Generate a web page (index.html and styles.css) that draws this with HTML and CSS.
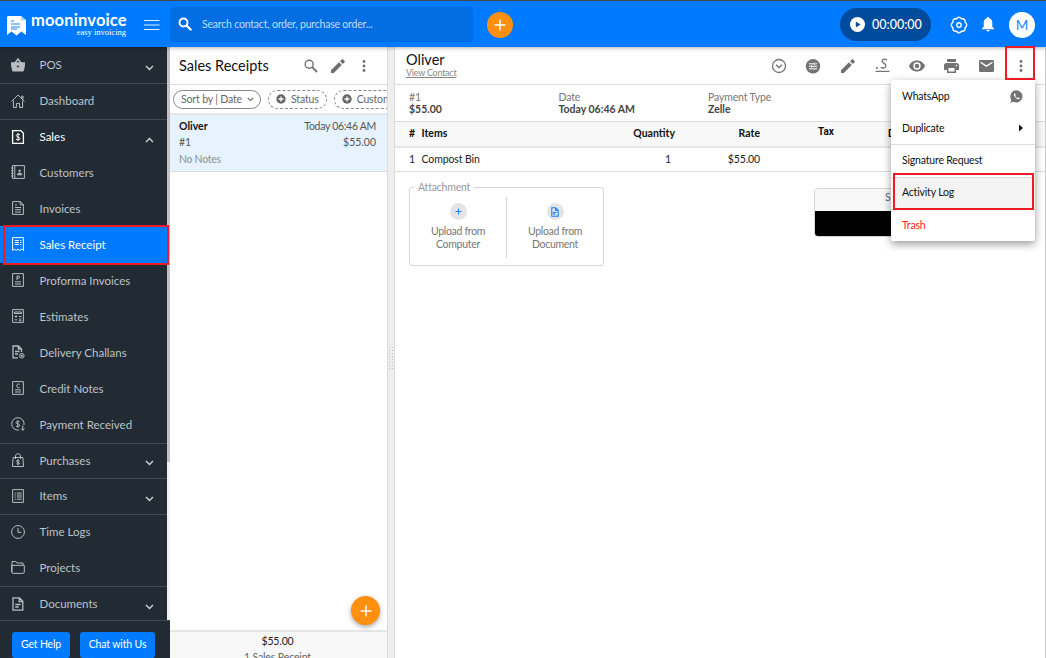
FILE: index.html
```html
<!DOCTYPE html>
<html lang="en">
<head>
<meta charset="UTF-8" />
<meta name="viewport" content="width=device-width, initial-scale=1" />
<title>Sales Receipts - Moon Invoice</title>
<link rel="stylesheet" href="styles.css">
</head>
<body>
  <header class="topbar">
    <div class="brand">
      <svg class="brand-icon" width="19" height="20" viewBox="0 0 19 20">
        <path d="M1 0h13l5 4v15l-4.500-3.500-5 4-5-4L0 19V1z" fill="#fff"/>
        <path d="M4 5h3M4 8h9M4 11h9M4 13h6" stroke="#1684ff" stroke-width="1.100"/>
        <path d="M14 0v4.500h5" fill="#a9d2ff"/>
      </svg>
      <div class="brand-text">
        <div class="brand-name">mooninvoice</div>
        <div class="brand-tag">easy invoicing</div>
      </div>
      <svg class="burger" width="16" height="12" viewBox="0 0 16 12"><path d="M0 1.500h15.500M0 6h15.500M0 10.500h15.500" stroke="#e2f0ff"/></svg>
    </div>
    <div class="search">
      <svg width="15" height="15" viewBox="0 0 15 15" fill="none" stroke="#fff"><circle cx="5.500" cy="5.500" r="4" stroke-width="1.900"/><path d="M8.500 8.500l4.800 4.800" stroke-width="2.200"/></svg>
      <span>Search contact, order, purchase order...</span>
    </div>
    <div class="add"><svg width="12" height="12" viewBox="0 0 12 12"><path d="M6 .5v11M.5 6h11" stroke="#fff" stroke-width="1.500"/></svg></div>
    <div class="topbar-right">
      <div class="timer">
        <svg width="15" height="15" viewBox="0 0 15 15"><circle cx="7.500" cy="7.500" r="7.500" fill="#fff"/><path d="M5.800 4.400v6.200l4.700-3.100z" fill="#004b9b"/></svg>
        <span>00:00:00</span>
      </div>
      <svg class="gear" width="18" height="18" viewBox="0 0 18 18" fill="none" stroke="#fff" stroke-width="1.400">
        <path d="M6.500 2.800Q9-.4 11.500 2.800 15.600 2.300 15.100 6.300 18.300 9 15.100 11.700 15.600 15.700 11.500 15.200 9 18.400 6.500 15.200 2.400 15.700 2.900 11.700-.3 9 2.900 6.300 2.400 2.300 6.500 2.800z" stroke-linejoin="round"/>
        <circle cx="9" cy="9" r="2.200"/>
      </svg>
      <svg class="bell" width="12" height="15" viewBox="0 0 12 15" fill="#fff"><path d="M6 0c.7 0 1.100.5 1.100 1.200C9.300 1.700 10.300 3.500 10.300 6v3.800L12 11.500v.7H0v-.7l1.700-1.700V6c0-2.500 1-4.300 3.200-4.800C4.900.5 5.300 0 6 0zM4.500 13.100h3c0 .9-.7 1.500-1.500 1.500s-1.500-.6-1.500-1.500z"/></svg>
      <div class="avatar">M</div>
    </div>
  </header>

  <div class="page">
    <nav class="sidebar">
      <div class="menu">
        <div class="group">
          <div class="nav-item">
            <svg class="ico" viewBox="0 0 14 14"><path d="M4 5L7 1l3 4" fill="none" stroke="#b9bdc1" stroke-width="1.500"/><path d="M0 4.800h14L12.300 13H1.700z" fill="#b9bdc1"/><circle cx="7" cy="8.500" r="1.400" fill="#222a33"/></svg>
            <span>POS</span>
            <svg class="chev" viewBox="0 0 9 6"><path d="M1 1l3.500 3.500L8 1"/></svg>
          </div>
        </div>
        <div class="group">
          <div class="nav-item">
            <svg class="ico" viewBox="0 0 14 14"><path d="M.6 7.500L7 1l6.400 6.500M2.400 6.500v7h3V9.400h3.200v4.100h3v-7M10.800 4.500V2h1.200v3.500"/></svg>
            <span>Dashboard</span>
          </div>
        </div>
        <div class="group">
          <div class="nav-item open">
            <svg class="ico" viewBox="0 0 14 14"><path d="M1.600.6h8.200l2.600 2.600v10.200H1.600z" stroke-width="1.300"/><path d="M8.900 4.800C8.300 3.900 5.300 3.900 5.300 5.600s3.600 1 3.600 2.900-3 1.700-3.800.6M7 3.200v7.600"/></svg>
            <span>Sales</span>
            <svg class="chev" viewBox="0 0 9 6"><path d="M1 5l3.500-3.500L8 5"/></svg>
          </div>
          <div class="nav-item">
            <svg class="ico" viewBox="0 0 14 14"><path d="M1.500.6h11.900v12.800H1.500zM3.800.6v12.800M0 3h2.500M0 5.700h2.500M0 8.300h2.500M0 11h2.500"/><path d="M6.300 9.800c0-2.300 4.600-2.300 4.600 0z" fill="#b9bdc1"/><circle cx="8.600" cy="5.700" r=".8" fill="#b9bdc1"/></svg>
            <span>Customers</span>
          </div>
          <div class="nav-item">
            <svg class="ico" viewBox="0 0 14 14"><path d="M1.600.6h7.800l3 3v9.800H1.600zM9.200.6v3.200h3.200M4 4h2M4 6.500h6M4 8.700h6M4 11h6"/></svg>
            <span>Invoices</span>
          </div>
          <div class="nav-item active">
            <svg class="ico" viewBox="0 0 14 14"><path d="M1.600.6h10.800v12.800l-1.800-1.200-1.800 1.200L7 12.200l-1.800 1.200-1.800-1.200-1.800 1.200zM3.800 3.500h4M3.800 5.500h4M3.800 7.500h4M9.200 3.500h1.200M9.200 5.500h1.200M9.200 7.500h1.200"/></svg>
            <span>Sales Receipt</span>
          </div>
          <div class="nav-item">
            <svg class="ico" viewBox="0 0 14 14"><path d="M1.600.6h10.800v12.800H1.600zM4 8.800h6M4 11h6M6 7V3h1.500c1.400 0 1.400 2.200 0 2.200H6"/></svg>
            <span>Proforma Invoices</span>
          </div>
          <div class="nav-item">
            <svg class="ico" viewBox="0 0 14 14"><path d="M1.600.6h10.800v12.800H1.600zM3.500 3h7v1.500h-7zM3.700 7.500h2.600M5 6.300v2.400M8 7.500h2.500M3.700 10.800h2.600M8 10h2.500M8 11.700h2.500"/></svg>
            <span>Estimates</span>
          </div>
          <div class="nav-item">
            <svg class="ico" viewBox="0 0 14 14"><path d="M7 12.800H2V1h5.500l3 3v3M7.300 1v3.200h3.200M4 6.500h4.500M4 9h3" stroke-width="1.300"/><circle cx="10.800" cy="10.700" r="2.300"/><path d="M9.600 10.700h2.400M10.800 9.600v2.400"/></svg>
            <span>Delivery Challans</span>
          </div>
          <div class="nav-item">
            <svg class="ico" viewBox="0 0 14 14"><path d="M1.600.6h10.800v12.800H1.600zM4 8.800h6M4 11h6M8.600 3.500c-1-1-2.900-.5-2.900 1.400s1.900 2.400 2.900 1.400"/></svg>
            <span>Credit Notes</span>
          </div>
          <div class="nav-item">
            <svg class="ico" viewBox="0 0 14 14"><path d="M8 13A6.200 6.200 0 1 1 13 8M8.500 5C7.700 4 5.100 4 5.100 5.600s3.500 1 3.500 2.700-2.800 1.700-3.600.6M6.800 3.500v7M11.800 8.500v4.800M10.200 11.600l1.600 1.700 1.600-1.700"/></svg>
            <span>Payment Received</span>
          </div>
        </div>
        <div class="group short">
          <div class="nav-item">
            <svg class="ico" viewBox="0 0 14 14"><path d="M2.200 4.500h9.600l.8 9H1.400zM4.500 6V3c0-3 5-3 5 0v3M8.400 7.500c-.8-.8-2.900-.6-2.800.6s2.900.8 2.900 2.100-2.200 1.300-3 .4M7 6.500v5.600"/></svg>
            <span>Purchases</span>
            <svg class="chev" viewBox="0 0 9 6"><path d="M1 1l3.500 3.500L8 1"/></svg>
          </div>
        </div>
        <div class="group">
          <div class="nav-item">
            <svg class="ico" viewBox="0 0 14 14"><path d="M1.600.6h10.800v12.800H1.600zM3.500 4h1.300M5.800 4h5M3.500 6h1.300M5.800 6h5M3.500 8h1.300M5.800 8h5M3.500 10.200h1.300M5.800 10.200h5"/></svg>
            <span>Items</span>
            <svg class="chev" viewBox="0 0 9 6"><path d="M1 1l3.500 3.500L8 1"/></svg>
          </div>
        </div>
        <div class="group">
          <div class="nav-item">
            <svg class="ico" viewBox="0 0 14 14"><circle cx="7" cy="7" r="6.400"/><path d="M7 3v4.300h3.300"/></svg>
            <span>Time Logs</span>
          </div>
          <div class="nav-item">
            <svg class="ico" viewBox="0 0 14 14"><path d="M1 12V1.500h3.800L6 3h6v2M.7 5.300h12.600v6.500q0 1.600-1.600 1.600H2.300Q.7 13.400.7 11.800z"/></svg>
            <span>Projects</span>
          </div>
        </div>
        <div class="group last">
          <div class="nav-item">
            <svg class="ico" viewBox="0 0 14 14"><path d="M2 .9h6.500l3.300 3.300v8.900H2zM8.200.9v3.600h3.600M4.200 7.500h5.300M4.200 10h3.500" stroke-width="1.300"/></svg>
            <span>Documents</span>
            <svg class="chev" viewBox="0 0 9 6"><path d="M1 1l3.500 3.500L8 1"/></svg>
          </div>
        </div>
      </div>
      <div class="scrollbar"><div class="thumb"></div></div>
      <div class="help">
        <div class="help-btn">Get Help</div>
        <div class="help-btn wide">Chat with Us</div>
      </div>
      <div class="mark mark-nav"></div>
    </nav>

    <section class="list">
      <div class="list-head">
        <h1>Sales Receipts</h1>
        <svg width="14" height="14" viewBox="0 0 14 14" fill="none" stroke="#6f6f6f"><circle cx="5.200" cy="5.200" r="4" stroke-width="1.400"/><path d="M8.200 8.200l4.800 4.800" stroke-width="1.800"/></svg>
        <svg width="14" height="14" viewBox="0 0 14 14" fill="#6f6f6f"><path d="M0 11.200V14h2.800l8-8L8 3.200zM13.600 3.200c.4-.4.4-.8 0-1.200L12 .4c-.4-.4-.8-.4-1.200 0L9 2.200 11.800 5z"/></svg>
        <svg width="4" height="12" viewBox="0 0 4 12" fill="#6f6f6f"><circle cx="2" cy="1.500" r="1.400"/><circle cx="2" cy="6" r="1.400"/><circle cx="2" cy="10.500" r="1.400"/></svg>
      </div>
      <div class="filters">
        <div class="chip solid">Sort by | Date <svg width="7" height="5" viewBox="0 0 7 5"><path d="M.8 1l2.700 2.600L6.200 1" fill="none" stroke="#666" stroke-width="1.100"/></svg></div>
        <div class="chip"><svg width="10" height="10" viewBox="0 0 10 10"><circle cx="5" cy="5" r="4.700" fill="#666"/><path d="M5 2.500v5M2.500 5h5" stroke="#fff" stroke-width="1.300"/></svg>Status</div>
        <div class="chip"><svg width="10" height="10" viewBox="0 0 10 10"><circle cx="5" cy="5" r="4.700" fill="#666"/><path d="M5 2.500v5M2.500 5h5" stroke="#fff" stroke-width="1.300"/></svg>Customer</div>
      </div>
      <div class="receipt">
        <div class="line"><b>Oliver</b><span class="when">Today 06:46 AM</span></div>
        <div class="line"><span>#1</span><span>$55.00</span></div>
        <div class="line notes">No Notes</div>
      </div>
      <div class="list-body"></div>
      <div class="list-foot">
        <div class="sum">$55.00</div>
        <div>1 Sales Receipt</div>
      </div>
      <div class="fab"><svg width="12" height="12" viewBox="0 0 12 12"><path d="M6 .5v11M.5 6h11" stroke="#fff" stroke-width="1.500"/></svg></div>
    </section>

    <div class="splitter">
      <svg width="6" height="24" viewBox="0 0 6 24"><path d="M1.500 0v24M4.500 0v24" stroke="#bdbdbd" stroke-dasharray="1 2"/></svg>
    </div>

    <main class="detail">
      <div class="detail-head">
        <div class="who">
          <h2>Oliver</h2>
          <a>View Contact</a>
        </div>
        <div class="tools">
          <div class="tool"><svg width="16" height="16" viewBox="0 0 16 16" fill="none" stroke="#737373" stroke-width="1.300"><circle cx="8" cy="8" r="6.500"/><path d="M5 6.700l3 2.800 3-2.800"/></svg></div>
          <div class="tool"><svg width="16" height="16" viewBox="0 0 16 16"><circle cx="8" cy="8.300" r="7.200" fill="#737373"/><path d="M4 5.800h5M10.500 5.800h1.700M4 8.300h1.700M7 8.300h5.200M4 10.800h4M9.700 10.800h2.500M9.700 4.600v2.400M6.400 7.100v2.400M9 9.600V12" stroke="#fff"/></svg></div>
          <div class="tool"><svg width="14" height="14" viewBox="0 0 14 14" fill="#6f6f6f"><path d="M0 11.200V14h2.800l8-8L8 3.200zM13.600 3.200c.4-.4.4-.8 0-1.200L12 .4c-.4-.4-.8-.4-1.200 0L9 2.200 11.800 5z"/></svg></div>
          <div class="tool"><svg width="15" height="15" viewBox="0 0 15 15" fill="none" stroke="#737373" stroke-width="1.400"><path d="M12 1.800C9.500.4 6.800 1.600 7.300 3.600s3.900 2 3.500 4.400-3.800 2.500-5 1.100M.5 13.400h14"/><path d="M1 9.800h1.800" stroke-width="1.700"/></svg></div>
          <div class="tool"><svg width="16" height="12" viewBox="0 0 16 12" fill="#737373"><path fill-rule="evenodd" d="M8 .5C4.400.5 1.300 2.700 0 6c1.300 3.300 4.400 5.500 8 5.500s6.700-2.200 8-5.500C14.700 2.700 11.600.5 8 .5zm0 9.200a3.700 3.700 0 1 1 0-7.400 3.700 3.700 0 0 1 0 7.400z"/><circle cx="8" cy="6" r="2.200"/></svg></div>
          <div class="tool"><svg width="15" height="14" viewBox="0 0 15 14" fill="#737373"><path fill-rule="evenodd" d="M3 0h9v3H3zM2.500 4h10Q15 4 15 6.500V11h-3v3H3v-3H0V6.500Q0 4 2.500 4zM4.500 9v3.500h6V9zM12.500 5.800a.8.800 0 1 0 0 1.600.8.800 0 0 0 0-1.600z"/></svg></div>
          <div class="tool"><svg width="15" height="12" viewBox="0 0 15 12"><rect width="15" height="12" rx="1.300" fill="#737373"/><path d="M1.500 2.200l6 3.900 6-3.900" fill="none" stroke="#fff" stroke-width="1.300"/></svg></div>
          <div class="tool"><svg width="4" height="12" viewBox="0 0 4 12" fill="#6f6f6f"><circle cx="2" cy="1.500" r="1.400"/><circle cx="2" cy="6" r="1.400"/><circle cx="2" cy="10.500" r="1.400"/></svg></div>
        </div>
      </div>
      <div class="info">
        <div><p>#1</p><b>$55.00</b></div>
        <div><p>Date</p><b>Today 06:46 AM</b></div>
        <div><p>Payment Type</p><b>Zelle</b></div>
      </div>
      <div class="row row-head">
        <span>#</span><span>Items</span><span class="num">Quantity</span><span class="num">Rate</span><span class="tax">Tax</span><span class="tax disc">Discount</span>
      </div>
      <div class="row">
        <span>1</span><span>Compost Bin</span><span class="num qty">1</span><span class="num">$55.00</span>
      </div>
      <div class="below">
        <fieldset class="attach">
          <legend>Attachment</legend>
          <div class="upload">
            <div class="dot"><svg width="7" height="7" viewBox="0 0 7 7"><path d="M3.500.5v6M.5 3.500h6" stroke="#1a82ff"/></svg></div>
            Upload from<br>Computer
          </div>
          <div class="upload">
            <div class="dot"><svg width="8" height="10" viewBox="0 0 8 10" fill="none" stroke="#1a82ff" stroke-width="1.100"><path d="M.8.800h3.900l2.500 2.500v5.900H.8zM4.500.8v2.700h2.700M2.500 6.800V5.500h3M2.500 7.300h2"/></svg></div>
            Upload from<br>Document
          </div>
        </fieldset>
        <div class="totals">
          <div class="totals-top">Sub Total</div>
          <div class="totals-sum"></div>
        </div>
      </div>

      <div class="popup">
        <div class="popup-item">WhatsApp
          <svg width="13" height="13" viewBox="0 0 13 13"><path d="M6.500.3a6.100 6.100 0 1 1-3 11.500L.4 12.700l.9-3A6.100 6.100 0 0 1 6.500.3z" fill="#737373"/><path d="M4.200 3.400c-1 1.200.3 3.300 1.400 4.400s3.100 2.200 4.100 1.100l-.1-.9-1.400-.7-.8.700C6.500 7.700 5.500 6.700 5.200 5.900l.6-.8-.6-1.600z" fill="#fff"/></svg>
        </div>
        <div class="popup-item">Duplicate
          <svg width="4" height="8" viewBox="0 0 4 8"><path d="M0 0.500v7L4 4z" fill="#111"/></svg>
        </div>
        <div class="popup-item ruled">Signature Request</div>
        <div class="popup-item ruled hover">Activity Log</div>
        <div class="popup-item ruled trash">Trash</div>
        <div class="mark mark-log"></div>
      </div>
      <div class="mark mark-more"></div>
    </main>
  </div>
</body>
</html>
```

FILE: styles.css
```css
* {
  box-sizing: border-box;
}
body {
  margin: 0;
  width: 1046px;
  height: 658px;
  overflow: hidden;
  display: flex;
  flex-direction: column;
  font-family: Lato, sans-serif;
  font-size: 10.5px;
  color: #222;
  background: #fff;
}
h1, h2, p {
  margin: 0;
  font-weight: 400;
}
svg {
  display: block;
  flex: none;
}

/* top bar */
.topbar {
  height: 47px;
  flex: none;
  display: flex;
  align-items: center;
  background: #007bff;
  border-top: 1px solid #46484b;
  color: #fff;
  position: relative;
  z-index: 1;
  box-shadow: 0 1px 4px rgba(0, 0, 0, 0.3);
  padding-top: 1px;
}
.brand {
  width: 170px;
  display: flex;
  align-items: center;
  padding-left: 7px;
}
.brand-icon {
  margin-top: 2px;
}
.brand-text {
  width: 96px;
  margin-left: 5px;
}
.brand-name {
  font-size: 16.5px;
  line-height: 16px;
  font-weight: 700;
  letter-spacing: 0.15px;
}
.brand-tag {
  font: 8.5px/9px "Liberation Serif", serif;
  text-align: right;
  padding-right: 1px;
}
.burger {
  margin-left: 17px;
}
.search {
  width: 303px;
  height: 35px;
  display: flex;
  align-items: center;
  gap: 9px;
  padding: 0 0 1px 8px;
  border-radius: 4px;
  background: #006ee3;
  color: #c4dcf8;
  letter-spacing: -0.2px;
}
.add {
  width: 26px;
  height: 26px;
  margin-left: 14px;
  display: flex;
  align-items: center;
  justify-content: center;
  border-radius: 50%;
  background: #ff8f0f;
}
.topbar-right {
  margin-left: auto;
  padding-right: 11px;
  display: flex;
  align-items: center;
}
.timer {
  width: 91px;
  height: 33px;
  display: flex;
  align-items: center;
  gap: 7px;
  padding-left: 10px;
  border-radius: 17px;
  background: #004b9b;
  font-size: 12.5px;
  font-weight: 500;
}
.timer span {
  margin-top: -1px;
}
.gear {
  margin-left: 19px;
}
.bell {
  margin: 0 15px 0 14px;
}
.avatar {
  width: 26px;
  height: 26px;
  line-height: 26px;
  border-radius: 50%;
  background: #fff;
  color: #1a82ff;
  font-size: 13.5px;
  text-align: center;
}

.page {
  flex: 1;
  display: flex;
  min-height: 0;
}

/* sidebar */
.sidebar {
  width: 170px;
  display: grid;
  grid-template-columns: 167px 3px;
  grid-template-rows: 573px 1fr;
  background: #222a33;
  position: relative;
}
.menu {
  padding-top: 1px;
  overflow: hidden;
}
.group + .group {
  border-top: 1px solid #434a52;
}
.group + .group .nav-item:first-child {
  height: 35px;
}
.group.short .nav-item:first-child {
  height: 34px !important;
}
.group:first-child .nav-item {
  height: 35px;
}
.nav-item {
  height: 36px;
  display: flex;
  align-items: center;
  padding: 0 13px 2px 11px;
  color: #bfc3c7;
  font-size: 11.5px;
}
.nav-item span {
  margin-left: 14.5px;
}
.ico {
  width: 14px;
  height: 14px;
  fill: none;
  stroke: #b9bdc1;
  stroke-width: 1;
}
.chev {
  width: 9px;
  height: 6px;
  margin: 6px 0 0 auto;
  fill: none;
  stroke: #d0d3d5;
  stroke-width: 1.4;
}
.nav-item.open, .nav-item.active {
  color: #fff;
}
.nav-item.active {
  background: #007bff;
  height: 37px;
  margin-top: -1px;
  padding-bottom: 1px;
}
.open .ico, .active .ico {
  stroke: #fff;
}
.scrollbar {
  background: #f1f1f1;
}
.thumb {
  height: 415px;
  background: #c1c1c1;
}
.help {
  grid-column: span 2;
  border-top: 1px solid #434a52;
  padding: 11px 0 0 12px;
  display: flex;
  gap: 10px;
}
.help-btn {
  width: 58px;
  height: 26px;
  line-height: 25px;
  border-radius: 3px;
  background: #007bff;
  color: #fff;
  text-align: center;
  white-space: nowrap;
  letter-spacing: -0.15px;
}
.help-btn.wide {
  width: 75px;
}

/* receipts list */
.list {
  width: 217px;
  display: flex;
  flex-direction: column;
  position: relative;
  overflow: hidden;
}
.list-head {
  height: 38px;
  flex: none;
  display: flex;
  align-items: center;
  padding: 0 0 0 9px;
  border-bottom: 1px solid #ddd;
}
.list-head h1 {
  width: 125px;
  font-size: 14.5px;
  color: #111;
}
.list-head svg + svg {
  margin-left: 13px;
}
.list-head svg:last-child {
  margin-left: 17px;
}
.filters {
  height: 30px;
  flex: none;
  display: flex;
  align-items: center;
  gap: 7px;
  padding-left: 3px;
  border-bottom: 2px solid #e6e6e6;
}
.chip {
  height: 19px;
  flex: none;
  display: flex;
  align-items: center;
  gap: 5px;
  padding: 0 7px;
  border: 1px dashed #888;
  border-radius: 10px;
  color: #666;
  white-space: nowrap;
  letter-spacing: -0.15px;
}
.chip.solid {
  width: 88px;
  border-style: solid;
}
.receipt {
  height: 57px;
  flex: none;
  padding: 3px 11px 0 9px;
  background: #e6f3fe;
  border-bottom: 1px solid #ddd;
  color: #555;
}
.line {
  display: flex;
  justify-content: space-between;
  line-height: 16px;
}
.line b {
  color: #111;
}
.when {
  letter-spacing: -0.3px;
}
.line.notes {
  color: #8a9299;
  letter-spacing: -0.3px;
  padding-top: 1px;
}
.list-body {
  flex: 1;
}
.list-foot {
  height: 28px;
  flex: none;
  padding: 1px 2px 0 0;
  border-top: 2px solid #e6e6e6;
  background: #f8f8f8;
  text-align: center;
  line-height: 16px;
  letter-spacing: -0.15px;
  color: #666;
}
.sum {
  color: #222;
}
.fab {
  position: absolute;
  right: 7px;
  bottom: 33px;
  width: 29px;
  height: 29px;
  display: flex;
  align-items: center;
  justify-content: center;
  border-radius: 50%;
  background: #ff8f0f;
  box-shadow: 0 2px 5px rgba(0, 0, 0, 0.35);
}

.splitter {
  width: 8px;
  display: flex;
  align-items: center;
  justify-content: center;
  padding-top: 12px;
  background: #eee;
  border: 1px solid #dcdcdc;
  border-width: 0 1px;
}

/* receipt detail */
.detail {
  flex: 1;
  position: relative;
  border-right: 1px solid #ccc;
}
.detail-head {
  height: 38px;
  display: flex;
  justify-content: space-between;
  padding: 5px 7px 0 11px;
  border-bottom: 1px solid #ddd;
}
.who h2 {
  font-size: 14.5px;
  line-height: 17px;
  margin-top: -1px;
  color: #111;
}
.who a {
  display: block;
  font-size: 9px;
  line-height: 10px;
  letter-spacing: -0.25px;
  color: #888;
  text-decoration: underline;
}
.tools {
  display: flex;
}
.tool {
  width: 34.6px;
  height: 27px;
  display: flex;
  align-items: center;
  justify-content: center;
}
.info {
  height: 37px;
  display: grid;
  grid-template-columns: 149.5px 149.5px 1fr;
  padding: 6px 0 0 14px;
  border-bottom: 1px solid #ddd;
  line-height: 12px;
  color: #444;
}
.info p {
  color: #777;
  letter-spacing: -0.15px;
}
.row {
  height: 24px;
  display: grid;
  grid-template-columns: 12.5px 207.5px 46px 85px 58px 70px;
  align-items: center;
  padding: 0 0 1px 14px;
  border-bottom: 1px solid #ddd;
  letter-spacing: -0.1px;
}
.row-head {
  height: 26px;
  padding-bottom: 2px;
  background: #f8f8f8;
  border-bottom: 2px solid #e6e6e6;
  font-weight: 700;
  letter-spacing: 0;
  color: #111;
}
.num {
  text-align: right;
}
.row-head .num {
  margin-left: -20px;
}
.qty {
  padding-right: 4px;
}
.tax {
  font-family: Roboto, sans-serif;
  font-size: 10px;
  padding-left: 58px;
  margin-top: -3px;
}
.tax.disc {
  padding-left: 70px;
  margin-top: 0;
}
.below {
  display: flex;
  align-items: flex-start;
  gap: 210px;
  padding: 9px 0 0 14px;
}
.attach {
  width: 195px;
  height: 85px;
  margin: 0;
  padding: 3px 0 0;
  display: grid;
  grid-template-columns: 96px 1fr;
  border: 1px solid #d5d5d5;
  border-radius: 3px;
  color: #777;
  line-height: 13px;
}
.attach legend {
  margin-left: 4px;
  padding: 0 4px;
  line-height: 13px;
  letter-spacing: -0.2px;
  color: #999;
}
.upload {
  height: 61px;
  padding-top: 6px;
  text-align: center;
  letter-spacing: -0.3px;
}
.upload + .upload {
  border-left: 1px solid #d5d5d5;
}
.dot {
  width: 17px;
  height: 17px;
  margin: 0 auto 5px;
  display: flex;
  align-items: center;
  justify-content: center;
  border-radius: 50%;
  background: #e4e4e4;
}
.totals {
  width: 216px;
  margin-top: 7px;
  border: 1px solid #d5d5d5;
  border-radius: 4px;
  overflow: hidden;
}
.totals-top {
  height: 22px;
  padding-left: 70px;
  line-height: 16px;
  background: #f8f8f8;
  color: #5b6b8c;
}
.totals-sum {
  height: 25px;
  background: #000;
}

/* more menu */
.popup {
  position: absolute;
  top: 33px;
  right: 10px;
  width: 144px;
  height: 161px;
  background: #fff;
  border-radius: 2px;
  box-shadow: 0 3px 9px rgba(0, 0, 0, 0.4);
}
.popup-item {
  height: 32px;
  display: flex;
  align-items: center;
  justify-content: space-between;
  padding: 0 12px 0 11px;
  letter-spacing: -0.18px;
  color: #111;
}
.popup-item.ruled {
  height: 32.5px;
  padding-bottom: 2px;
  border-top: 1px solid #ddd;
}
.popup-item.hover {
  background: #f3f3f3;
}
.popup-item.trash {
  color: #f22;
}

/* highlight frames */
.mark {
  position: absolute;
  border: 2px solid #ed1c24;
}
.mark-nav {
  left: 3px;
  top: 178px;
  width: 166px;
  height: 40px;
}
.mark-log {
  left: 2px;
  top: 93px;
  width: 141px;
  height: 37px;
}
.mark-more {
  right: 10px;
  top: -1px;
  width: 30px;
  height: 34px;
  z-index: 2;
}
```
